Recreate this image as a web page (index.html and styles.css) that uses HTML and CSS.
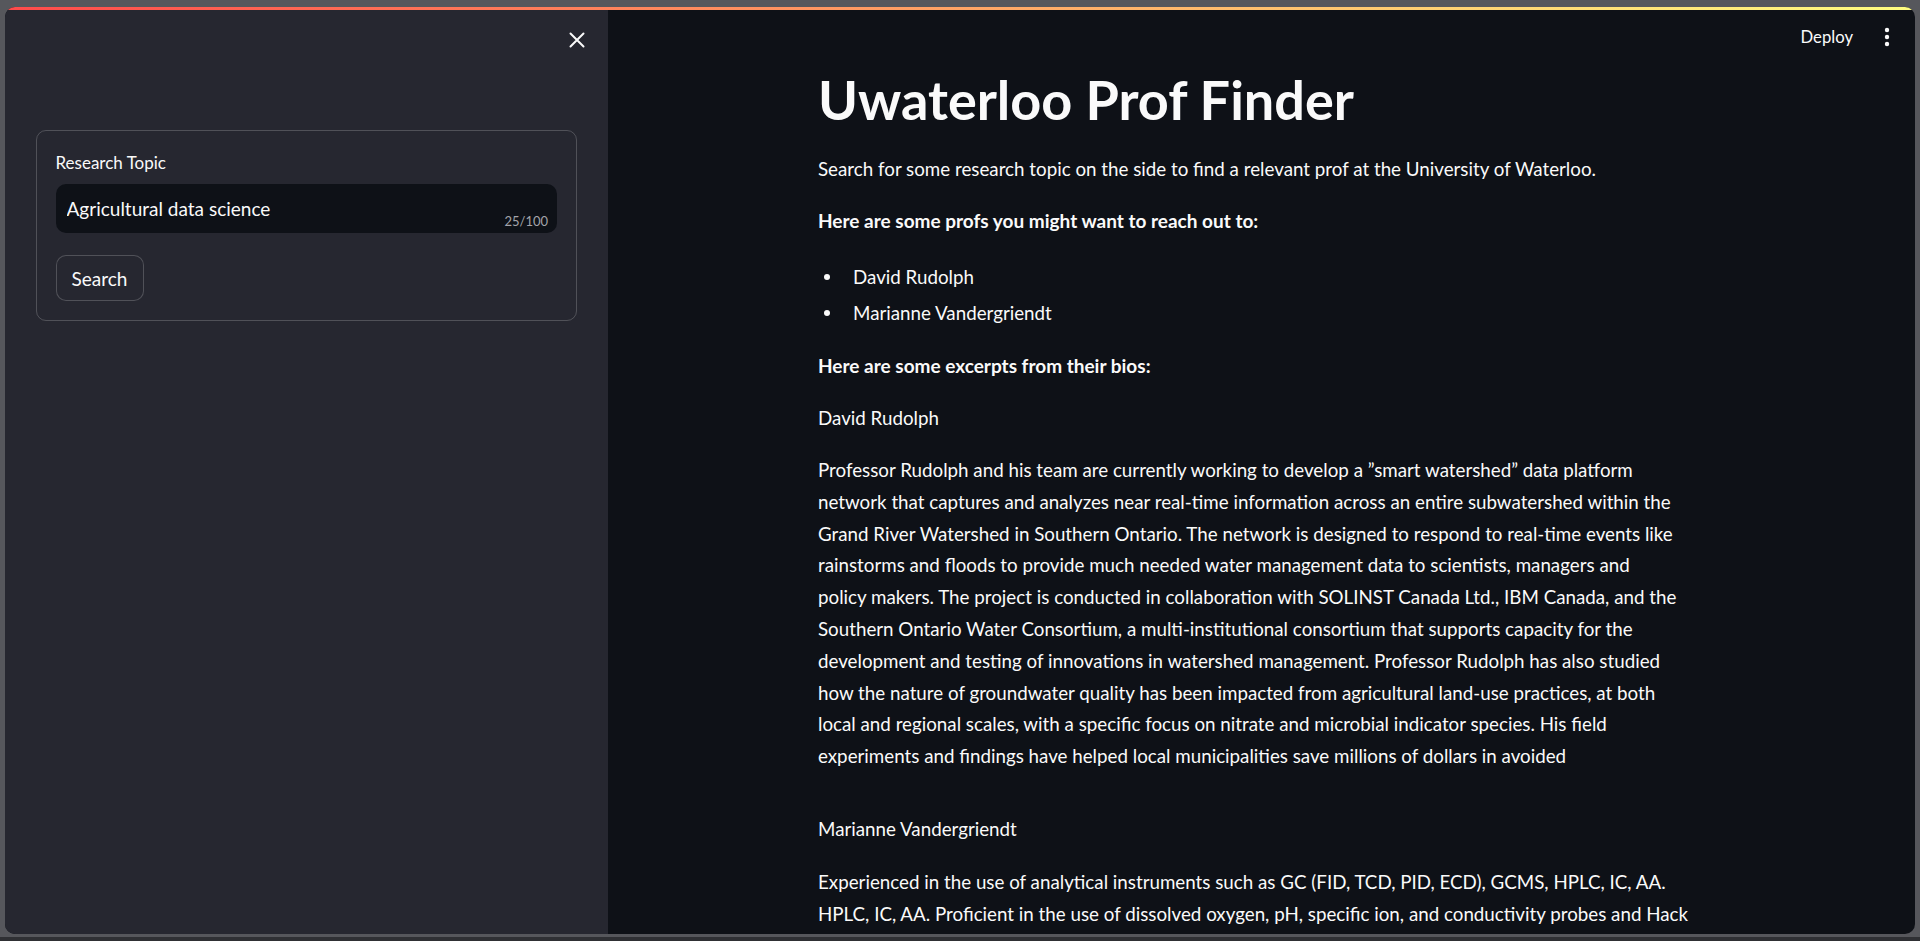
FILE: index.html
```html
<!DOCTYPE html>
<html lang="en">
<head>
<meta charset="utf-8">
<title>Uwaterloo Prof Finder</title>
<link rel="stylesheet" href="styles.css">
</head>
<body>
<div class="window">
  <div class="decoration"></div>
  <div class="app">
    <aside class="sidebar">
      <div class="sidebar-header">
        <button class="close-btn" type="button" aria-label="Close sidebar">
          <svg width="16" height="16" viewBox="0 0 16 16"><path d="M1.5 1.5 L14.5 14.5 M14.5 1.5 L1.5 14.5" stroke="#fafafa" stroke-width="2" stroke-linecap="round"/></svg>
        </button>
      </div>
      <form class="form-card">
        <label class="field-label" for="topic">Research Topic</label>
        <div class="input-wrap">
          <input id="topic" class="text-input" type="text" value="Agricultural data science">
          <span class="counter">25/100</span>
        </div>
        <button type="button" class="search-btn">Search</button>
      </form>
    </aside>
    <main class="main">
      <header class="toolbar">
        <span class="deploy">Deploy</span>
        <span class="kebab" aria-label="Main menu">
          <svg width="6" height="20" viewBox="0 0 6 20"><circle cx="3" cy="3" r="2.2" fill="#fafafa"/><circle cx="3" cy="10" r="2.2" fill="#fafafa"/><circle cx="3" cy="17" r="2.2" fill="#fafafa"/></svg>
        </span>
      </header>
      <div class="content">
        <h1 class="title">Uwaterloo Prof Finder</h1>
        <p class="text">Search for some research topic on the side to find a relevant prof at the University of Waterloo.</p>
        <p class="text strong">Here are some profs you might want to reach out to:</p>
        <ul class="prof-list">
          <li>David Rudolph</li>
          <li>Marianne Vandergriendt</li>
        </ul>
        <p class="text strong">Here are some excerpts from their bios:</p>
        <p class="text">David Rudolph</p>
        <p class="text bio">Professor Rudolph and his team are currently working to develop a ”smart watershed” data platform network that captures and analyzes near real-time information across an entire subwatershed within the Grand River Watershed in Southern Ontario. The network is designed to respond to real-time events like rainstorms and floods to provide much needed water management data to scientists, managers and policy makers. The project is conducted in collaboration with SOLINST Canada Ltd., IBM Canada, and the Southern Ontario Water Consortium, a multi-institutional consortium that supports capacity for the development and testing of innovations in watershed management. Professor Rudolph has also studied how the nature of groundwater quality has been impacted from agricultural land-use practices, at both local and regional scales, with a specific focus on nitrate and microbial indicator species. His field experiments and findings have helped local municipalities save millions of dollars in avoided</p>
        <p class="text name-gap">Marianne Vandergriendt</p>
        <p class="text bio bio-wide">Experienced in the use of analytical instruments such as GC (FID, TCD, PID, ECD), GCMS, HPLC, IC, AA.<br>HPLC, IC, AA. Proficient in the use of dissolved oxygen, pH, specific ion, and conductivity probes and Hack</p>
      </div>
    </main>
  </div>
</div>
<div class="taskbar"></div>
</body>
</html>
```

FILE: styles.css
```css
* { box-sizing: border-box; }

html, body {
  margin: 0;
  padding: 0;
  height: 941px;
  overflow: hidden;
  background: #56575c;
  font-family: Lato, "Noto Sans", sans-serif;
  color: #fafafa;
}

.window {
  margin: 7px 5px 0 5px;
  height: 927px;
  border-radius: 10px;
  overflow: hidden;
  display: flex;
  flex-direction: column;
  background: #0e1117;
}

.decoration {
  height: 3px;
  flex: none;
  background: linear-gradient(90deg, #ff4b4b, #fffd80);
}

.app {
  flex: 1;
  display: flex;
  min-height: 0;
}

/* Sidebar */
.sidebar {
  width: 603px;
  flex: none;
  background: #262730;
  padding: 0 31px 0 30.5px;
}

.sidebar-header {
  height: 60px;
  display: flex;
  justify-content: flex-end;
  align-items: center;
}

.close-btn {
  background: none;
  border: 0;
  padding: 0;
  width: 16px;
  height: 16px;
  margin-right: -8px;
  display: flex;
  cursor: pointer;
}

.form-card {
  margin: 60px 0 0;
  border: 1px solid rgba(250, 250, 250, 0.2);
  border-radius: 10px;
  padding: 20px 19px 19px;
  display: flex;
  flex-direction: column;
  align-items: flex-start;
}

.field-label {
  font-size: 17px;
  line-height: 24px;
  margin-bottom: 9px;
}

.input-wrap {
  position: relative;
  width: 100%;
  height: 49px;
  background: #0e1117;
  border-radius: 10px;
}

.text-input {
  width: 100%;
  height: 100%;
  border: 0;
  outline: none;
  background: transparent;
  color: #fafafa;
  font: inherit;
  font-size: 19px;
  padding: 0 70px 0 11px;
}

.counter {
  position: absolute;
  right: 9px;
  bottom: 4px;
  font-size: 13px;
  color: #a3a4aa;
}

.search-btn {
  margin-top: 22px;
  width: 88px;
  height: 46px;
  background: #262730;
  border: 1px solid rgba(250, 250, 250, 0.2);
  border-radius: 10px;
  color: #fafafa;
  font: inherit;
  font-size: 19px;
  cursor: pointer;
}

/* Main */
.main {
  flex: 1;
  min-width: 0;
  display: flex;
  flex-direction: column;
  overflow: hidden;
}

.toolbar {
  height: 54px;
  flex: none;
  display: flex;
  justify-content: flex-end;
  align-items: center;
  padding-right: 25px;
}

.deploy {
  font-size: 16.7px;
  margin-right: 31px;
}

.kebab {
  display: flex;
}

.content {
  width: 861px;
  margin: 3px 0 0 210px;
}

.title {
  margin: 0 0 20px;
  font-size: 54px;
  line-height: 66px;
  font-weight: 700;
}

.text {
  margin: 0 0 20px;
  font-size: 18.75px;
  line-height: 32px;
}

.strong {
  font-weight: 700;
  font-size: 19px;
}

.bio {
  line-height: 31.8px;
  margin-top: 20px;
}

.bio-wide {
  width: 880px;
  margin-top: 21px;
}

.prof-list {
  margin: 24px 0 21px;
  padding-left: 35px;
  font-size: 18.75px;
  line-height: 32px;
  list-style: none;
}

.prof-list li {
  position: relative;
  margin-bottom: 4px;
}

.prof-list li::before {
  content: "";
  position: absolute;
  left: -29px;
  top: 13px;
  width: 6px;
  height: 6px;
  border-radius: 50%;
  background: #fafafa;
}

.name-gap { margin-top: 41px; }

.taskbar {
  position: fixed;
  left: 0;
  right: 0;
  bottom: 0;
  height: 4px;
  background: #2f3034;
}
```
